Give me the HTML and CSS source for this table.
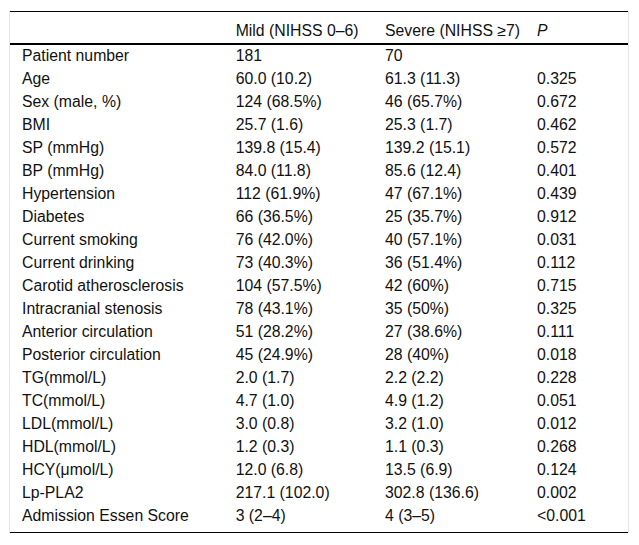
FILE: index.html
```html
<!DOCTYPE html>
<html lang="en">
<head>
<meta charset="utf-8">
<title>Table</title>
<link rel="stylesheet" href="styles.css">
</head>
<body>
<div class="wrap">
<table class="data">
<thead>
<tr><th class="c1"></th><th class="c2">Mild (NIHSS 0–6)</th><th class="c3">Severe (NIHSS ≥7)</th><th class="c4"><i>P</i></th></tr>
</thead>
<tbody>
<tr><td>Patient number</td><td>181</td><td>70</td><td></td></tr>
<tr><td>Age</td><td>60.0 (10.2)</td><td>61.3 (11.3)</td><td>0.325</td></tr>
<tr><td>Sex (male, %)</td><td>124 (68.5%)</td><td>46 (65.7%)</td><td>0.672</td></tr>
<tr><td>BMI</td><td>25.7 (1.6)</td><td>25.3 (1.7)</td><td>0.462</td></tr>
<tr><td>SP (mmHg)</td><td>139.8 (15.4)</td><td>139.2 (15.1)</td><td>0.572</td></tr>
<tr><td>BP (mmHg)</td><td>84.0 (11.8)</td><td>85.6 (12.4)</td><td>0.401</td></tr>
<tr><td>Hypertension</td><td>112 (61.9%)</td><td>47 (67.1%)</td><td>0.439</td></tr>
<tr><td>Diabetes</td><td>66 (36.5%)</td><td>25 (35.7%)</td><td>0.912</td></tr>
<tr><td>Current smoking</td><td>76 (42.0%)</td><td>40 (57.1%)</td><td>0.031</td></tr>
<tr><td>Current drinking</td><td>73 (40.3%)</td><td>36 (51.4%)</td><td>0.112</td></tr>
<tr><td>Carotid atherosclerosis</td><td>104 (57.5%)</td><td>42 (60%)</td><td>0.715</td></tr>
<tr><td>Intracranial stenosis</td><td>78 (43.1%)</td><td>35 (50%)</td><td>0.325</td></tr>
<tr><td>Anterior circulation</td><td>51 (28.2%)</td><td>27 (38.6%)</td><td>0.111</td></tr>
<tr><td>Posterior circulation</td><td>45 (24.9%)</td><td>28 (40%)</td><td>0.018</td></tr>
<tr><td>TG(mmol/L)</td><td>2.0 (1.7)</td><td>2.2 (2.2)</td><td>0.228</td></tr>
<tr><td>TC(mmol/L)</td><td>4.7 (1.0)</td><td>4.9 (1.2)</td><td>0.051</td></tr>
<tr><td>LDL(mmol/L)</td><td>3.0 (0.8)</td><td>3.2 (1.0)</td><td>0.012</td></tr>
<tr><td>HDL(mmol/L)</td><td>1.2 (0.3)</td><td>1.1 (0.3)</td><td>0.268</td></tr>
<tr><td>HCY(μmol/L)</td><td>12.0 (6.8)</td><td>13.5 (6.9)</td><td>0.124</td></tr>
<tr><td>Lp-PLA2</td><td>217.1 (102.0)</td><td>302.8 (136.6)</td><td>0.002</td></tr>
<tr class="last"><td>Admission Essen Score</td><td>3 (2–4)</td><td>4 (3–5)</td><td>&lt;0.001</td></tr>
</tbody>
</table>
</div>
</body>
</html>
```
FILE: styles.css
```css
html, body {
  margin: 0;
  padding: 0;
  background: #fff;
}
body {
  font-family: "Liberation Sans", Arial, sans-serif;
  font-size: 15.8px;
  color: #111;
}
.wrap {
  margin: 11px 0 0 9px;
  width: 618px;
  border-left: 1px solid #e6e6e6;
  border-right: 1px solid #e6e6e6;
}
.data {
  width: 100%;
  border-collapse: collapse;
  table-layout: fixed;
  border-top: 1px solid #000;
  border-bottom: 1px solid #000;
}
.data th {
  font-weight: normal;
  text-align: left;
  line-height: 18px;
  padding: 10px 0 3px 12px;
  border-bottom: 2px solid #000;
  white-space: nowrap;
}
.data th.c1 { width: 201.7px; }
.data th.c2 { width: 137.3px; }
.data th.c3 { width: 140px; }
.data td {
  line-height: 18px;
  padding: 2px 0 3px 12px;
  white-space: nowrap;
}
.data tr.last td {
  padding-bottom: 7px;
}
```
